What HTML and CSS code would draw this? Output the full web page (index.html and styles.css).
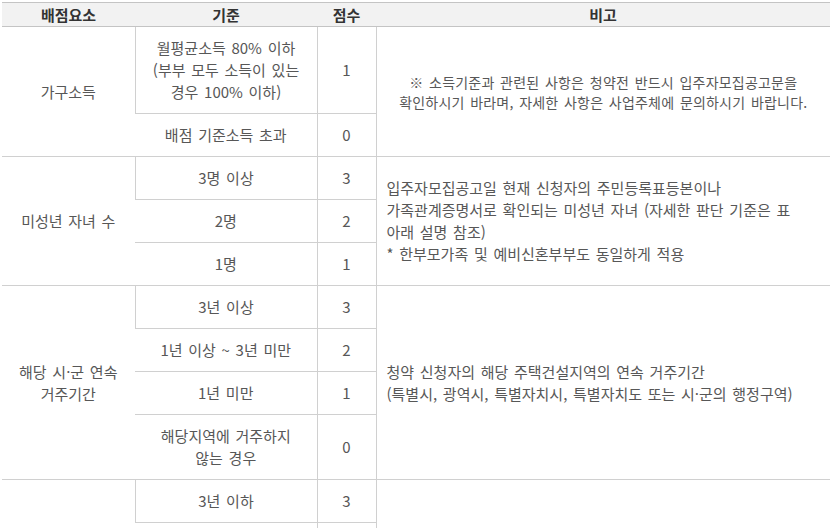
FILE: index.html
```html
<!DOCTYPE html>
<html lang="ko">
<head>
<meta charset="utf-8">
<title>배점 기준표</title>
<link rel="stylesheet" href="styles.css">
</head>
<body>
<div class="page">
  <table class="score">
    <colgroup>
      <col class="c1">
      <col class="c2">
      <col class="c3">
      <col class="c4">
    </colgroup>
    <thead>
      <tr>
        <th>배점요소</th>
        <th>기준</th>
        <th>점수</th>
        <th>비고</th>
      </tr>
    </thead>
    <tbody>
      <tr>
        <td rowspan="2">가구소득</td>
        <td>월평균소득 80% 이하<br>(부부 모두 소득이 있는<br>경우 100% 이하)</td>
        <td>1</td>
        <td rowspan="2" class="note note-center">※ 소득기준과 관련된 사항은 청약전 반드시 입주자모집공고문을<br>확인하시기 바라며, 자세한 사항은 사업주체에 문의하시기 바랍니다.</td>
      </tr>
      <tr>
        <td>배점 기준소득 초과</td>
        <td>0</td>
      </tr>
      <tr>
        <td rowspan="3">미성년 자녀 수</td>
        <td>3명 이상</td>
        <td>3</td>
        <td rowspan="3" class="note">입주자모집공고일 현재 신청자의 주민등록표등본이나<br>가족관계증명서로 확인되는 미성년 자녀 (자세한 판단 기준은 표<br>아래 설명 참조)<br>* 한부모가족 및 예비신혼부부도 동일하게 적용</td>
      </tr>
      <tr>
        <td>2명</td>
        <td>2</td>
      </tr>
      <tr>
        <td>1명</td>
        <td>1</td>
      </tr>
      <tr>
        <td rowspan="4">해당 시·군 연속<br>거주기간</td>
        <td>3년 이상</td>
        <td>3</td>
        <td rowspan="4" class="note">청약 신청자의 해당 주택건설지역의 연속 거주기간<br>(특별시, 광역시, 특별자치시, 특별자치도 또는 시·군의 행정구역)</td>
      </tr>
      <tr>
        <td>1년 이상 ~ 3년 미만</td>
        <td>2</td>
      </tr>
      <tr>
        <td>1년 미만</td>
        <td>1</td>
      </tr>
      <tr>
        <td>해당지역에 거주하지<br>않는 경우</td>
        <td>0</td>
      </tr>
      <tr>
        <td rowspan="3">혼인기간</td>
        <td>3년 이하</td>
        <td>3</td>
        <td rowspan="3" class="note">입주자모집공고일 현재 혼인기간</td>
      </tr>
      <tr>
        <td>3년 초과 ~ 5년 이하</td>
        <td>2</td>
      </tr>
      <tr>
        <td>5년 초과 ~ 7년 이하</td>
        <td>1</td>
      </tr>
    </tbody>
  </table>
</div>
</body>
</html>
```
FILE: styles.css
```css
html, body {
  margin: 0;
  padding: 0;
  background: #ffffff;
}

.page {
  padding: 2px 3px 0 2px;
  font-family: "Noto Sans CJK KR", "Malgun Gothic", "Noto Sans", sans-serif;
}

.score {
  width: 100%;
  border-collapse: collapse;
  table-layout: fixed;
  font-size: 15px;
  color: #575757;
}

.c1 { width: 133px; }
.c2 { width: 182px; }
.c3 { width: 59px; }

.score th {
  background: #f2f2f2;
  color: #333333;
  font-weight: 600;
  font-size: 15px;
  line-height: 23px;
  padding: 0;
  border-top: 1px solid #c4c4c4;
  border-bottom: 1px solid #c4c4c4;
  text-align: center;
}

.score td {
  line-height: 22px;
  padding: 10px 2px;
  border-bottom: 1px solid #d0d0d0;
  border-left: 1px solid #d0d0d0;
  text-align: center;
  vertical-align: middle;
  word-spacing: 1.5px;
}

.score td:first-child {
  border-left: none;
}

.score td.note {
  text-align: left;
  padding: 10px 10px;
}

.score td.note-center {
  text-align: center;
  font-size: 14px;
  line-height: 20px;
  letter-spacing: 0.2px;
}
```
